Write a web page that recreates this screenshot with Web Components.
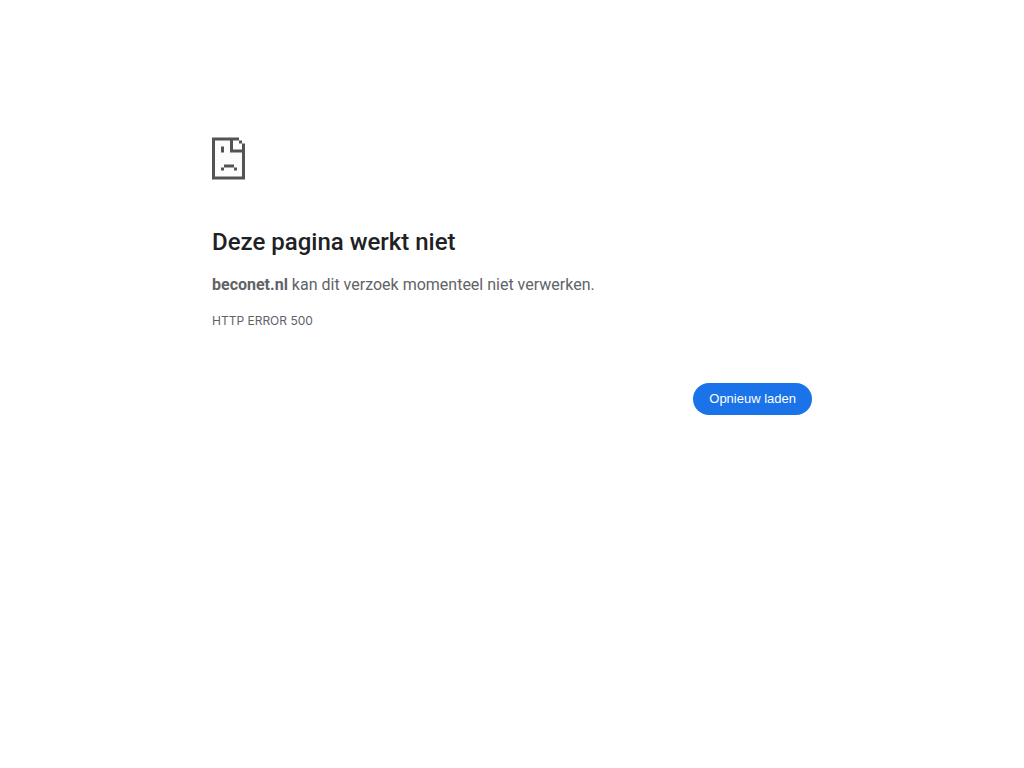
<!DOCTYPE html>
<html lang="nl">
<head>
<meta charset="utf-8">
<meta name="viewport" content="width=device-width, initial-scale=1">
<title>beconet.nl</title>
<style>
body { margin: 0; background: #fff; color: #5f6368; font-family: Inter, "Liberation Sans", sans-serif; }
</style>
</head>
<body>
<error-page>
  <sad-page-icon slot="icon"></sad-page-icon>
  <span slot="title">Deze pagina werkt niet</span>
  <span slot="summary"><strong>beconet.nl</strong> kan dit verzoek momenteel niet verwerken.</span>
  <span slot="code">HTTP ERROR 500</span>
  <reload-button slot="actions">Opnieuw laden</reload-button>
</error-page>
<script>
customElements.define('sad-page-icon', class extends HTMLElement {
  constructor() {
    super();
    this.attachShadow({ mode: 'open' }).innerHTML = `
      <style>
        :host { display: block; height: 43px; }
        svg { display: block; }
      </style>
      <svg width="33" height="43" viewBox="0 -0.5 33 43" fill="#535353" aria-hidden="true">
        <path fill="#fcfcfc" d="M3 3h15v12h12v24H3z"/>
        <path d="M0 0h27v3H3v36h27V6h3v36H0zM27 3h3v3h-3zM18 3h3v9h9v3H18zM9 9h3v6H9zM12 27h10v3H12zM9 30h3v3H9zM22 30h3v3h-3z"/>
      </svg>`;
  }
});
customElements.define('reload-button', class extends HTMLElement {
  constructor() {
    super();
    this.attachShadow({ mode: 'open' }).innerHTML = `
      <style>
        :host { display: block; }
        button { display: block; margin: 0; border: 0; border-radius: 20px; padding: 8px 16px; background: #1a73e8; color: #fff; font: 500 13px/16px "Liberation Sans", sans-serif; cursor: pointer; }
      </style>
      <button type="button"><slot></slot></button>`;
    this.shadowRoot.querySelector('button').addEventListener('click', () => location.reload());
  }
});
customElements.define('error-page', class extends HTMLElement {
  constructor() {
    super();
    this.attachShadow({ mode: 'open' }).innerHTML = `
      <style>
        :host { display: block; box-sizing: border-box; max-width: 600px; margin: 0 auto; padding-top: 137px; }
        h1 { margin: 48px 0 16px; color: #202124; font-family: Roboto, sans-serif; font-size: 24px; font-weight: 500; line-height: 28px; }
        p { margin: 0; line-height: 24px; }
        .summary { margin-top: 17px; font-family: Roboto, sans-serif; font-size: 16px; }
        .code { margin-top: 12px; font-size: 12px; }
        .actions { display: flex; justify-content: flex-end; margin-top: 50px; }
      </style>
      <main>
        <slot name="icon"></slot>
        <h1><slot name="title"></slot></h1>
        <p class="summary"><slot name="summary"></slot></p>
        <p class="code"><slot name="code"></slot></p>
        <div class="actions"><slot name="actions"></slot></div>
      </main>`;
  }
});
</script>
</body>
</html>
